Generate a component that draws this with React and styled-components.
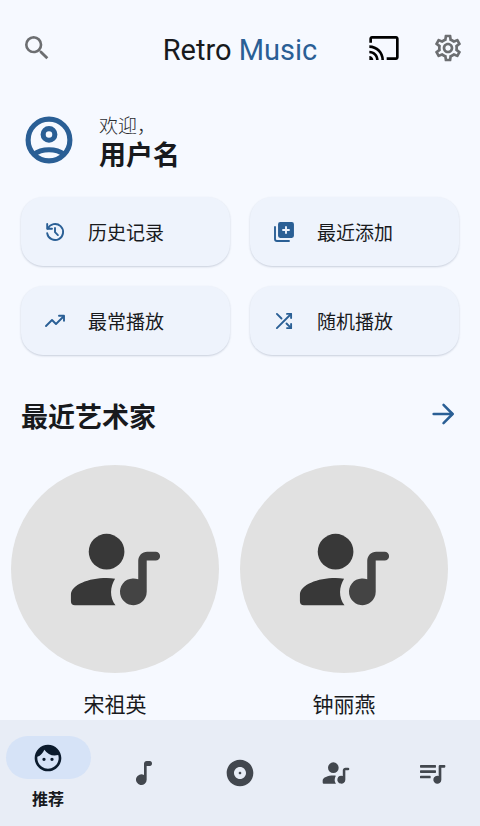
import React, { useState } from "react";
import styled, { createGlobalStyle } from "styled-components";
import { MdAlbum, MdCast, MdFace, MdOutlineSettings, MdSearch } from "react-icons/md";

const GlobalStyle = createGlobalStyle`
    * {
        box-sizing: border-box;
    }
    body {
        margin: 0;
        background: #f6f9ff;
        color: #181a1d;
        font-family: Roboto, "Noto Sans CJK SC", sans-serif;
    }
    button {
        display: flex;
        align-items: center;
        padding: 0;
        border: none;
        background: none;
        color: inherit;
        font: inherit;
        cursor: pointer;
    }
    h1, h2, p, ul {
        margin: 0;
        padding: 0;
    }
    svg {
        display: block;
        flex-shrink: 0;
    }
`;

const Screen = styled.div`
    height: 100vh;
    display: flex;
    flex-direction: column;
`;

const Content = styled.main`
    flex: 1;
    min-height: 0;
    overflow-y: auto;
    scrollbar-width: none;
`;

const Header = styled.header`
    height: 96px;
    padding: 32px 16px 0;
    display: grid;
    grid-template-columns: 1fr auto 1fr;
    align-items: start;
`;

const Title = styled.h1`
    font-size: 29px;
    line-height: 36px;
    font-weight: 400;
    span {
        color: #2a5f95;
    }
`;

const Actions = styled.div`
    display: flex;
    justify-content: flex-end;
    gap: 32px;
`;

const IconButton = styled.button`
    justify-content: center;
    min-width: ${(props) => props.$width || 32}px;
    height: 32px;
    && {
        color: ${(props) => props.$color};
    }
`;

const Profile = styled.section`
    display: flex;
    align-items: flex-start;
    gap: 22px;
    padding: 16px 21px 0;
    color: #2a5f95;
`;

const Welcome = styled.p`
    font-size: 19px;
    line-height: 30px;
    font-weight: 300;
    color: #2b2d30;
`;

const UserName = styled.p`
    font-size: 27px;
    line-height: 28px;
    font-weight: 700;
    color: #181a1d;
`;

const Shortcuts = styled.nav`
    display: grid;
    grid-template-columns: 1fr 1fr;
    gap: 20px;
    margin-top: 27px;
    padding: 0 21px;
`;

const Shortcut = styled.button`
    && {
        height: 69px;
        gap: 21px;
        padding: 0 22px;
        border-radius: 22px;
        background: #eef3fc;
        box-shadow: 0 1px 2px rgba(60, 75, 110, 0.24);
        font-size: 19px;
    }
    svg {
        color: #2a5f95;
    }
`;

const SectionHead = styled.div`
    display: flex;
    justify-content: space-between;
    align-items: flex-start;
    margin-top: 43px;
    padding: 0 21px;
    h2 {
        font-size: 27px;
        line-height: 40px;
        font-weight: 700;
    }
`;

const ArtistList = styled.ul`
    display: flex;
    gap: 21px;
    margin-top: 27px;
    padding: 0 11px;
    overflow-x: auto;
    scrollbar-width: none;
    list-style: none;
`;

const Artist = styled.button`
    && {
        flex-direction: column;
        font-size: 21px;
        line-height: 32px;
    }
`;

const Cover = styled.span`
    width: 208px;
    height: 208px;
    margin-bottom: 16px;
    display: flex;
    align-items: center;
    justify-content: center;
    border-radius: 50%;
    background: #e1e1e1;
    color: #383838;
`;

const BottomNav = styled.nav`
    display: flex;
    height: 106px;
    padding: 16px 0;
    background: #e8edf6;
`;

const Tab = styled.button`
    && {
        flex: 1;
        flex-direction: column;
        justify-content: center;
        color: ${(props) => (props.$active ? "#0b1b2d" : "#42474e")};
    }
`;

const Pill = styled.span`
    display: flex;
    align-items: center;
    justify-content: center;
    width: 85px;
    height: 43px;
    border-radius: 22px;
    background: ${(props) => (props.$active ? "#d6e3f7" : "transparent")};
`;

const TabLabel = styled.span`
    margin-top: 11px;
    font-size: 16px;
    line-height: 20px;
    font-weight: 700;
    color: #181a1d;
`;

const AccountIcon = () => (
    <svg width="56" height="56" viewBox="0 0 24 24" fill="none" stroke="currentColor" strokeWidth="2.2">
        <circle cx="12" cy="12" r="8.95" />
        <circle cx="12" cy="9.6" r="2.5" />
        <path d="M5.4 18.3c1.8-1.4 4.2-2.1 6.6-2.1s4.8.7 6.6 2.1" />
    </svg>
);

const LineIcon = ({ size = 24, children }) => (
    <svg
        width={size}
        height={size}
        viewBox="0 0 24 24"
        fill="none"
        stroke="currentColor"
        strokeWidth="1.9"
        strokeLinecap="round"
        strokeLinejoin="round"
    >
        {children}
    </svg>
);

const HistoryIcon = () => (
    <LineIcon>
        <path d="M4.2 13.3a8 8 0 1 0 .6-4.6" />
        <path d="M4.2 4v4.8H9" />
        <path d="M12 8v4.2l2.9 2.9" />
    </LineIcon>
);

const TrendingIcon = () => (
    <LineIcon>
        <path d="M3 17l6-6 4 4 7.5-7.5" />
        <path d="M16 6.8h5v5" />
    </LineIcon>
);

const ShuffleIcon = () => (
    <LineIcon>
        <path d="M4.9 19.1 19 5M4.9 4.9l4.6 4.6M14.5 14.5l4.6 4.6" />
        <path d="M15 4.9h4.1V9M15 19.1h4.1V15" />
    </LineIcon>
);

const AddedIcon = () => (
    <LineIcon>
        <path d="M3 7v12a2 2 0 0 0 2 2h12" />
        <rect x="7" y="3" width="14" height="14" rx="1.2" fill="currentColor" />
        <path stroke="#eef3fc" d="M14 7v6M11 10h6" />
    </LineIcon>
);

const ArrowIcon = () => (
    <LineIcon size={32}>
        <path d="M5 12h14" />
        <path d="M12.4 5.2 19.2 12l-6.8 6.8" />
    </LineIcon>
);

const NoteIcon = () => (
    <svg width="32" height="32" viewBox="0 0 24 24" fill="currentColor">
        <path d="M12 5v8.55A4 4 0 1 0 14 17V6.8h2.4c1 0 1.6-.8 1.6-1.9s-.6-1.9-1.6-1.9H14c-1.1 0-2 .9-2 2z" />
    </svg>
);

const ArtistIcon = ({ size = 32, noteColor = "currentColor" }) => (
    <svg width={size} height={size} viewBox="0 0 24 24" fill="currentColor">
        <circle cx="10" cy="8" r="4" />
        <path d="M2.9 20a.9.9 0 0 1-.9-.9v-1.4C2 15.4 6 13.9 10 13.9c.7 0 1.3.05 1.9.15-.5.9-.9 1.9-.9 3s.3 2.1 1 2.95z" />
        <path
            fill={noteColor}
            d="M17.1 14.2V10c0-1.1.9-2 2-2H21a1 1 0 0 1 0 2h-2v7a3 3 0 1 1-1.9-2.8z"
        />
    </svg>
);

const QueueIcon = () => (
    <svg width="32" height="32" viewBox="0 0 24 24" fill="currentColor">
        <path d="M3.5 6h11a.5.5 0 0 1 .5.5v1a.5.5 0 0 1-.5.5h-11a.5.5 0 0 1-.5-.5v-1a.5.5 0 0 1 .5-.5zM3.5 10h11a.5.5 0 0 1 .5.5v1a.5.5 0 0 1-.5.5h-11a.5.5 0 0 1-.5-.5v-1a.5.5 0 0 1 .5-.5zM3.5 14h7a.5.5 0 0 1 .5.5v1a.5.5 0 0 1-.5.5h-7a.5.5 0 0 1-.5-.5v-1a.5.5 0 0 1 .5-.5z" />
        <path d="M17 14.18V7a1 1 0 0 1 1-1h3.4a.6.6 0 0 1 .6.6v.8a.6.6 0 0 1-.6.6H19v9a3 3 0 1 1-2-2.82z" />
    </svg>
);

const shortcuts = [
    { label: "历史记录", icon: <HistoryIcon /> },
    { label: "最近添加", icon: <AddedIcon /> },
    { label: "最常播放", icon: <TrendingIcon /> },
    { label: "随机播放", icon: <ShuffleIcon /> },
];

const artists = ["宋祖英", "钟丽燕"];

const tabs = [
    { label: "推荐", icon: <MdFace size={32} /> },
    { label: "歌曲", icon: <NoteIcon /> },
    { label: "专辑", icon: <MdAlbum size={32} /> },
    { label: "艺术家", icon: <ArtistIcon /> },
    { label: "播放列表", icon: <QueueIcon /> },
];

export default function App() {
    const [activeTab, setActiveTab] = useState(0);

    return (
        <Screen lang="zh-CN">
            <GlobalStyle />
            <Content>
                <Header>
                    <div>
                        <IconButton $width={42} $color="#6c6e71" aria-label="搜索">
                            <MdSearch size={32} />
                        </IconButton>
                    </div>
                    <Title>
                        Retro <span>Music</span>
                    </Title>
                    <Actions>
                        <IconButton $color="#000" aria-label="投射">
                            <MdCast size={32} />
                        </IconButton>
                        <IconButton $color="#6c6e71" aria-label="设置">
                            <MdOutlineSettings size={32} />
                        </IconButton>
                    </Actions>
                </Header>

                <Profile>
                    <AccountIcon />
                    <div>
                        <Welcome>欢迎，</Welcome>
                        <UserName>用户名</UserName>
                    </div>
                </Profile>

                <Shortcuts>
                    {shortcuts.map(({ label, icon }) => (
                        <Shortcut key={label}>
                            {icon}
                            {label}
                        </Shortcut>
                    ))}
                </Shortcuts>

                <SectionHead>
                    <h2>最近艺术家</h2>
                    <IconButton $color="#2a5f95" aria-label="更多">
                        <ArrowIcon />
                    </IconButton>
                </SectionHead>

                <ArtistList>
                    {artists.map((name) => (
                        <li key={name}>
                            <Artist>
                                <Cover>
                                    <ArtistIcon size={107} noteColor="#444" />
                                </Cover>
                                {name}
                            </Artist>
                        </li>
                    ))}
                </ArtistList>
            </Content>

            <BottomNav>
                {tabs.map(({ label, icon }, index) => {
                    const active = index === activeTab;
                    return (
                        <Tab
                            key={label}
                            $active={active}
                            aria-label={label}
                            onClick={() => setActiveTab(index)}
                        >
                            <Pill $active={active}>{icon}</Pill>
                            {active && <TabLabel>{label}</TabLabel>}
                        </Tab>
                    );
                })}
            </BottomNav>
        </Screen>
    );
}
